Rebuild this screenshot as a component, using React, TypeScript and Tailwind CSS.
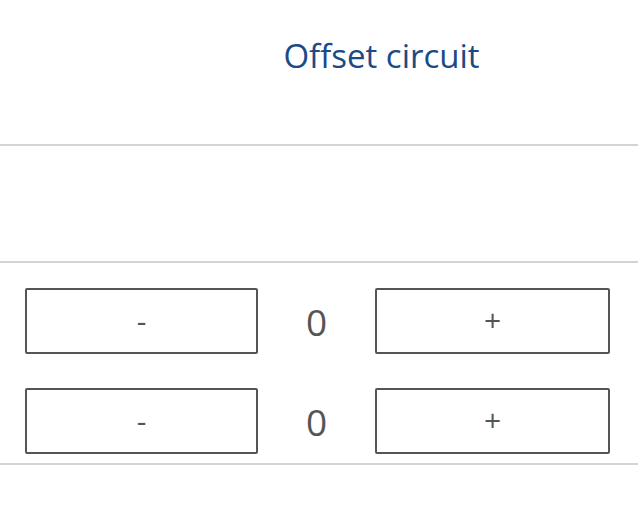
const font = { fontFamily: '"Open Sans", "Noto Sans", sans-serif' };

function StepRow({ value }: { value: number }) {
  return (
    <div className="flex items-center">
      <button className="w-[233px] h-[66px] border-[2.5px] border-[#555] rounded-[2px] bg-white text-[30px] text-[#555] leading-none">
        -
      </button>
      <div className="w-[117px] text-center text-[37px] text-[#555] leading-none">{value}</div>
      <button className="w-[235px] h-[66px] border-[2.5px] border-[#555] rounded-[2px] bg-white text-[30px] text-[#555] leading-none pb-[3px]">
        +
      </button>
    </div>
  );
}

export default function App() {
  return (
    <div className="w-[638px] h-[521px] bg-white overflow-hidden" style={font}>
      <div className="h-[146px] grid grid-cols-[125px_1fr] border-b-2 border-[#d4d4d4]">
        <div></div>
        <div className="pt-[39px] text-center text-[33px] text-[#1b4a86] leading-none">
          Offset circuit
        </div>
      </div>
      <div className="h-[117px] border-b-2 border-[#d4d4d4]"></div>
      <div className="pl-[25px] pt-[25px] pb-[9px] flex flex-col gap-[34px] border-b-2 border-[#d4d4d4]">
        <StepRow value={0} />
        <StepRow value={0} />
      </div>
    </div>
  );
}
